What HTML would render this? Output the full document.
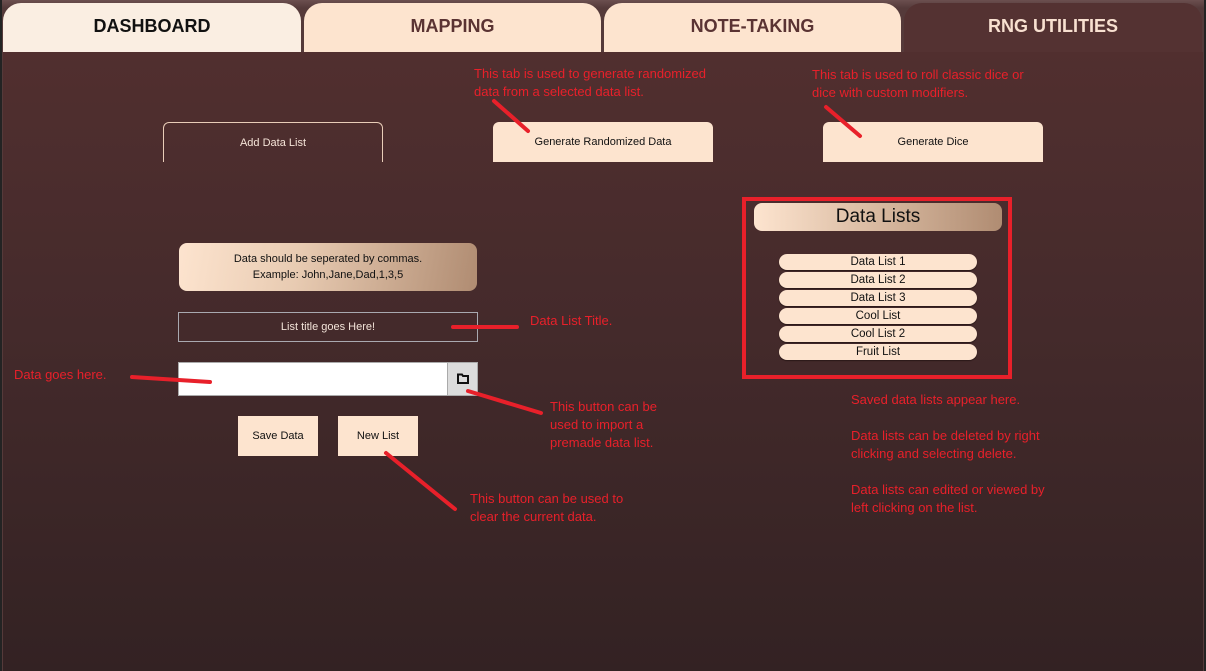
<!DOCTYPE html>
<html><head><meta charset="utf-8"><style>
*{margin:0;padding:0;box-sizing:border-box}
body{width:1206px;height:671px;background:#232323;font-family:"Liberation Sans",sans-serif;position:relative;overflow:hidden}
.frame{position:absolute;left:2px;top:0;width:1202px;height:671px;background:linear-gradient(#6b4f4f,#553a3a 8px)}
.panel{position:absolute;left:3px;top:52px;width:1200px;height:619px;background:linear-gradient(#512f2f,#442a2b 45%,#332223)}
.tab{position:absolute;top:3px;height:49px;border-radius:18px 18px 0 0;font-weight:bold;font-size:18px;text-align:center;line-height:46px}
.r{position:absolute;color:#e8202a;font-size:13px;line-height:18px}
.btn{position:absolute;font-size:11px;text-align:center;color:#111}
.li{position:absolute;left:779px;width:198px;height:16px;border-radius:8px;background:#fde4cf;font-size:11.5px;text-align:center;line-height:16px;color:#111;box-shadow:0 1px 1px #2a1818}
svg{position:absolute;left:0;top:0}
</style></head><body>
<div class="frame"></div>
<div class="panel"></div>
<div class="tab" style="left:3px;width:298px;background:#faeee2;color:#111">DASHBOARD</div>
<div class="tab" style="left:304px;width:297px;background:#fde4cf;color:#5a3333">MAPPING</div>
<div class="tab" style="left:604px;width:297px;background:#fde4cf;color:#5a3333">NOTE-TAKING</div>
<div class="tab" style="left:904px;width:298px;background:#543232;color:#f8e0d0">RNG UTILITIES</div>

<div class="btn" style="left:163px;top:122px;width:220px;height:40px;border:1px solid #e9cdb8;border-bottom:none;border-radius:6px 6px 0 0;color:#f5e4d8;line-height:40px">Add Data List</div>
<div class="btn" style="left:493px;top:122px;width:220px;height:40px;background:#fde4cf;border-radius:6px 6px 0 0;line-height:40px">Generate Randomized Data</div>
<div class="btn" style="left:823px;top:122px;width:220px;height:40px;background:#fde4cf;border-radius:6px 6px 0 0;line-height:40px">Generate Dice</div>

<div class="r" style="left:474px;top:65px">This tab is used to generate randomized<br>data from a selected data list.</div>
<div class="r" style="left:812px;top:66px">This tab is used to roll classic dice or<br>dice with custom modifiers.</div>

<div class="btn" style="left:179px;top:243px;width:298px;height:48px;border-radius:8px;background:linear-gradient(100deg,#fde4cf,#e8cbb2 40%,#b08c72);line-height:16px;padding-top:8px">Data should be seperated by commas.<br>Example: John,Jane,Dad,1,3,5</div>
<div class="btn" style="left:178px;top:312px;width:300px;height:30px;border:1px solid #a9a9b0;color:#f2e3d8;line-height:28px">List title goes Here!</div>
<div style="position:absolute;left:178px;top:362px;width:270px;height:34px;background:#fff;border:1px solid #aaa"></div>
<div style="position:absolute;left:447px;top:362px;width:31px;height:34px;background:#dcdcdc;border:1px solid #aaa"></div>
<svg style="left:457px;top:373px" width="12" height="11"><path d="M1 1.5 H5 L6 3 H11 V10 H1 Z" fill="none" stroke="#111" stroke-width="2"/></svg>
<div class="btn" style="left:238px;top:416px;width:80px;height:40px;background:#fde4cf;line-height:40px">Save Data</div>
<div class="btn" style="left:338px;top:416px;width:80px;height:40px;background:#fde4cf;line-height:40px">New List</div>

<div class="r" style="left:530px;top:312px">Data List Title.</div>
<div class="r" style="left:14px;top:366px">Data goes here.</div>
<div class="r" style="left:550px;top:398px">This button can be<br>used to import a<br>premade data list.</div>
<div class="r" style="left:470px;top:490px">This button can be used to<br>clear the current data.</div>

<div style="position:absolute;left:742px;top:197px;width:270px;height:182px;border:4px solid #e8202a"></div>
<div style="position:absolute;left:754px;top:203px;width:248px;height:28px;border-radius:8px;background:linear-gradient(90deg,#fde4cf,#d8b9a0 50%,#b08c72);font-size:19px;text-align:center;line-height:28px;color:#111">Data Lists</div>
<div class="li" style="top:254px">Data List 1</div>
<div class="li" style="top:272px">Data List 2</div>
<div class="li" style="top:290px">Data List 3</div>
<div class="li" style="top:308px">Cool List</div>
<div class="li" style="top:326px">Cool List 2</div>
<div class="li" style="top:344px">Fruit List</div>

<div class="r" style="left:851px;top:391px;font-size:13px">Saved data lists appear here.<br><br>Data lists can be deleted by right<br>clicking and selecting delete.<br><br>Data lists can edited or viewed by<br>left clicking on the list.</div>

<svg width="1206" height="671"><g stroke="#e8202a" stroke-width="4" stroke-linecap="round" fill="none">
<path d="M494 101 L528 131"/>
<path d="M826 107 L860 136"/>
<path d="M453 327 L517 327"/>
<path d="M132 377 L163 379 L210 382"/>
<path d="M468 391 L541 413"/>
<path d="M386 453 L455 509"/>
</g></svg>
</body></html>
